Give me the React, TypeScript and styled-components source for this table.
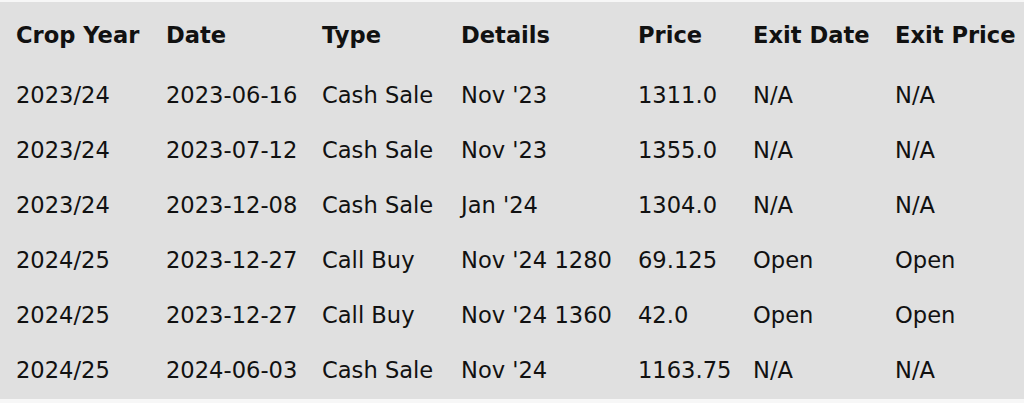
import React from 'react';
import styled, { createGlobalStyle } from 'styled-components';

interface Trade {
  cropYear: string;
  date: string;
  type: string;
  details: string;
  price: string;
  exitDate: string;
  exitPrice: string;
}

const trades: Trade[] = [
  { cropYear: '2023/24', date: '2023-06-16', type: 'Cash Sale', details: "Nov '23", price: '1311.0', exitDate: 'N/A', exitPrice: 'N/A' },
  { cropYear: '2023/24', date: '2023-07-12', type: 'Cash Sale', details: "Nov '23", price: '1355.0', exitDate: 'N/A', exitPrice: 'N/A' },
  { cropYear: '2023/24', date: '2023-12-08', type: 'Cash Sale', details: "Jan '24", price: '1304.0', exitDate: 'N/A', exitPrice: 'N/A' },
  { cropYear: '2024/25', date: '2023-12-27', type: 'Call Buy', details: "Nov '24 1280", price: '69.125', exitDate: 'Open', exitPrice: 'Open' },
  { cropYear: '2024/25', date: '2023-12-27', type: 'Call Buy', details: "Nov '24 1360", price: '42.0', exitDate: 'Open', exitPrice: 'Open' },
  { cropYear: '2024/25', date: '2024-06-03', type: 'Cash Sale', details: "Nov '24", price: '1163.75', exitDate: 'N/A', exitPrice: 'N/A' },
];

const columns = [
  { label: 'Crop Year', width: 150 },
  { label: 'Date', width: 156 },
  { label: 'Type', width: 139 },
  { label: 'Details', width: 177 },
  { label: 'Price', width: 115 },
  { label: 'Exit Date', width: 142 },
  { label: 'Exit Price', width: 147 },
];

const GlobalStyle = createGlobalStyle`
  html, body {
    margin: 0;
    padding: 0;
    background: #f7f7f7;
  }
  body {
    font-family: "DejaVu Sans", "Liberation Sans", sans-serif;
    color: #111;
  }
`;

const Panel = styled.div`
  margin: 2px 0 4px;
  padding-bottom: 2px;
  background: #e0e0e0;
  overflow: hidden;
  width: 1024px;
`;

const Table = styled.table`
  margin-left: 2px;
  border-collapse: collapse;
  table-layout: fixed;
  width: 1026px;
  font-size: 22.6px;
`;

const HeadCell = styled.th`
  height: 65px;
  padding: 0 14px;
  text-align: left;
  vertical-align: middle;
  font-weight: bold;
  white-space: nowrap;
`;

const Cell = styled.td`
  height: 55px;
  padding: 0 14px;
  vertical-align: middle;
  white-space: nowrap;
`;

function App() {
  return (
    <>
      <GlobalStyle />
      <Panel>
        <Table>
          <colgroup>
            {columns.map((c) => (
              <col key={c.label} style={{ width: c.width }} />
            ))}
          </colgroup>
          <thead>
            <tr>
              {columns.map((c) => (
                <HeadCell key={c.label}>{c.label}</HeadCell>
              ))}
            </tr>
          </thead>
          <tbody>
            {trades.map((t, i) => (
              <tr key={i}>
                <Cell>{t.cropYear}</Cell>
                <Cell>{t.date}</Cell>
                <Cell>{t.type}</Cell>
                <Cell>{t.details}</Cell>
                <Cell>{t.price}</Cell>
                <Cell>{t.exitDate}</Cell>
                <Cell>{t.exitPrice}</Cell>
              </tr>
            ))}
          </tbody>
        </Table>
      </Panel>
    </>
  );
}

export default App;
